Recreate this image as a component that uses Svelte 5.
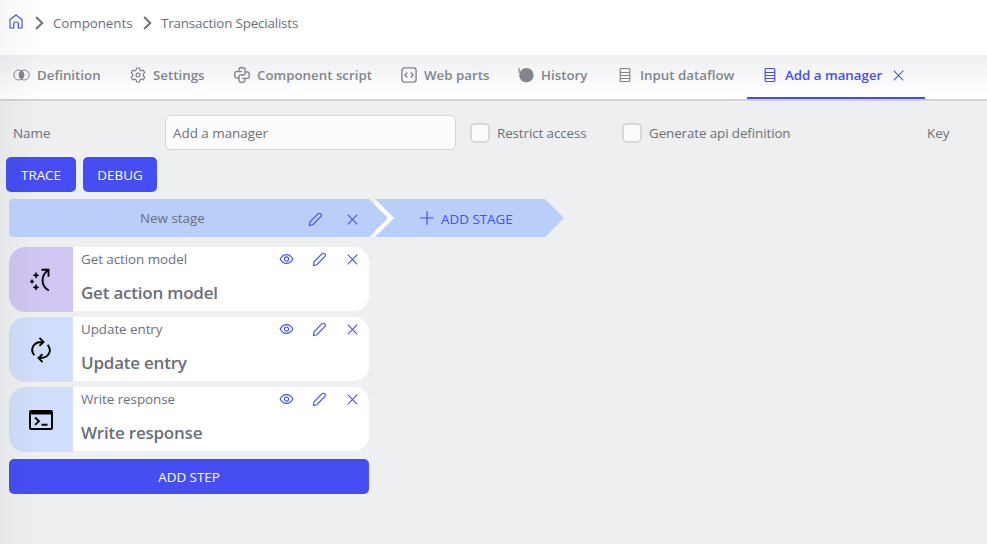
<script>
  const tabs = [
    { icon: 'rings', label: 'Definition', w: 64 },
    { icon: 'gear', label: 'Settings', w: 52 },
    { icon: 'python', label: 'Component script', w: 115 },
    { icon: 'code', label: 'Web parts', w: 65 },
    { icon: 'history', label: 'History', w: 47 },
    { icon: 'rows', label: 'Input dataflow', w: 93 },
    { icon: 'rows', label: 'Add a manager', w: 98, active: true }
  ];
  const steps = [
    { icon: 'model', label: 'Get action model', tone: 'purple' },
    { icon: 'update', label: 'Update entry', tone: 'blue' },
    { icon: 'terminal', label: 'Write response', tone: 'blue' }
  ];
</script>

{#snippet icon(name)}
  {#if name === 'home'}
    <svg width="14" height="15" viewBox="0 0 14 15"><path d="M1 5.6 7 1l6 4.6V14H9.3V9.3a1.3 1.3 0 0 0-1.3-1.3H6a1.3 1.3 0 0 0-1.3 1.3V14H1z" /></svg>
  {:else if name === 'chevron'}
    <svg class="heavy" width="9" height="14" viewBox="0 0 9 14"><path d="m1 1 6.3 6L1 13" /></svg>
  {:else if name === 'rings'}
    <svg class="thin" width="17" height="16" viewBox="0 0 17 16"><circle cx="5.8" cy="8" r="5" /><circle cx="11.2" cy="8" r="5" /><path d="M8.5 3.8a5 5 0 0 1 0 8.4 5 5 0 0 1 0-8.4z" fill="currentColor" /></svg>
  {:else if name === 'gear'}
    <svg width="16" height="16" viewBox="0 0 16 16"><path d="M6.6 1h2.8l.5 2 1.4.8 2-.6 1.4 2.4L13.3 7v2l1.4 1.4-1.4 2.4-2-.6-1.4.8-.5 2H6.600l-.5-2-1.4-.8-2 .6-1.4-2.4L2.700 9V7L1.300 5.600l1.400-2.400 2 .6L6.100 3z" /><circle cx="8" cy="8" r="1.9" /></svg>
  {:else if name === 'python'}
    <svg class="medium" width="16" height="16" viewBox="0 0 16 16"><path d="M8 4.600H2.500Q.8 4.600.8 6.300v3Q.8 11 2.500 11H5V9.500Q5 8 6.500 8h3Q11 8 11 6.500v-4Q11 .8 9.300.8H6.700Q5 .8 5 2.500v2.100M8 11.400h5.500q1.700 0 1.700-1.700v-3Q15.200 5 13.500 5H11M5 9.500v4q0 1.700 1.700 1.700h2.600q1.700 0 1.700-1.700v-2.100" /></svg>
  {:else if name === 'code'}
    <svg class="medium" width="16" height="16" viewBox="0 0 16 16"><rect x=".9" y=".9" width="14.2" height="14.2" rx="2.5" /><path d="M6.300 5.500 3.900 8l2.400 2.500M9.700 5.500 12.100 8l-2.400 2.500" /></svg>
  {:else if name === 'history'}
    <svg width="16" height="16" viewBox="0 0 16 16"><circle cx="8.400" cy="8.200" r="7.200" fill="currentColor" stroke="none" /><path d="M1.100 1v4.200h3" /></svg>
  {:else if name === 'rows'}
    <svg width="16" height="16" viewBox="0 0 16 16"><rect x="3.200" y="1.500" width="9.600" height="13" rx="1" /><path d="M3.200 5.500h9.600M3.200 8.500h9.600M3.200 11.500h9.600" /></svg>
  {:else if name === 'close'}
    <svg width="11" height="11" viewBox="0 0 12 12"><path d="m.8.8 10.400 10.400M11.200.8.8 11.200" /></svg>
  {:else if name === 'pencil'}
    <svg width="15" height="15" viewBox="0 0 16 16"><path d="m1.500 14.500.7-4 8.300-8.500q1.300-1.100 2.600-.5 1.400.7 1.300 2-.1.800-.8 1.500l-8.400 8.600z" /></svg>
  {:else if name === 'eye'}
    <svg width="15" height="12" viewBox="0 0 16 12"><path d="M1.200 6C2.800 3 5.200 1.300 8 1.300S13.200 3 14.800 6C13.200 9 10.800 10.700 8 10.700S2.800 9 1.200 6z" /><circle cx="8" cy="6" r="2.200" /></svg>
  {:else if name === 'plus'}
    <svg width="14" height="14" viewBox="0 0 14 14"><path d="M7 .3v13.400M.3 7h13.400" /></svg>
  {:else if name === 'model'}
    <svg class="heavy" width="24" height="26" viewBox="0 0 24 26"><path d="M12.500 2.700h7v7M19.500 2.700C11.500 8.500 11.500 18.500 19.800 23.500" /><path class="spark" d="m7 5.500.8 2 2 .8-2 .8-.8 2-.8-2-2-.8 2-.8zM3 12.500l.6 1.500 1.500.5-1.500.6L3 16.600l-.6-1.500-1.500-.6 1.500-.5zM7 17.500l.8 2 2 .8-2 .8-.8 2-.8-2-2-.8 2-.8z" /></svg>
  {:else if name === 'update'}
    <svg class="heavy" width="24" height="26" viewBox="0 0 24 26"><path d="M5.300 18.300C.3 11.500 5 4.500 13.500 5M10.500.9l4 4-4 4M18.700 7.700C23.700 14.500 19 21.500 10.500 21M13.500 17.100l-4 4 4 4" /></svg>
  {:else if name === 'terminal'}
    <svg class="heavy" width="24" height="20" viewBox="0 0 24 20"><rect x="1" y="1" width="22" height="18" rx="1" /><path d="M1 1h22v3.500H1z" fill="currentColor" stroke="none" /><path d="m6 7.500 4 3.700-4 3.700M12.500 14.800h6" /></svg>
  {/if}
{/snippet}

<div class="page">
  <header class="crumbs">
    <span class="home">{@render icon('home')}</span>
    <span class="sep">{@render icon('chevron')}</span>
    <span class="crumb first">Components</span>
    <span class="sep">{@render icon('chevron')}</span>
    <span class="crumb last">Transaction Specialists</span>
  </header>

  <nav class="tabs">
    {#each tabs as t}
      <div class="tab" class:active={t.active}>
        <span class="ticon">{@render icon(t.icon)}</span>
        <span class="tlabel" style:width="{t.w}px">{t.label}</span>
        {#if t.active}<span class="tclose">{@render icon('close')}</span>{/if}
      </div>
    {/each}
  </nav>

  <section class="form">
    <span class="name">Name</span>
    <input type="text" value="Add a manager" />
    <label class="restrict"><i class="box"></i><span>Restrict access</span></label>
    <label class="generate"><i class="box"></i><span>Generate api definition</span></label>
    <span>Key</span>
  </section>

  <div class="actions">
    <button class="trace">TRACE</button>
    <button class="debug">DEBUG</button>
  </div>

  <div class="stages">
    <div class="stage">
      <span class="stage-name">New stage</span>
      <span class="tool">{@render icon('pencil')}</span>
      <span class="tool">{@render icon('close')}</span>
    </div>
    <div class="add-stage">{@render icon('plus')}<span>ADD STAGE</span></div>
  </div>

  <div class="steps">
    {#each steps as s}
      <article class="step">
        <div class="badge {s.tone}">{@render icon(s.icon)}</div>
        <div class="body">
          <div class="top">
            <span class="kind">{s.label}</span>
            <span class="tool">{@render icon('eye')}</span>
            <span class="tool">{@render icon('pencil')}</span>
            <span class="tool">{@render icon('close')}</span>
          </div>
          <div class="title">{s.label}</div>
        </div>
      </article>
    {/each}
    <button class="add-step">ADD STEP</button>
  </div>
  <div class="edge"></div>
</div>

<style>
  :global(body) { margin: 0; }
  .page {
    position: relative;
    width: 987px;
    height: 544px;
    overflow: hidden;
    background: #eeeff1;
    color: #6b6f78;
    font: 13.4px/20px "Open Sans", "Noto Sans", sans-serif;
    white-space: nowrap;
  }
  .page, .page * { box-sizing: border-box; }
  svg {
    display: block;
    flex: none;
    fill: none;
    stroke: currentColor;
    stroke-width: 1.2;
    overflow: visible;
  }
  svg.thin { stroke-width: 1; }
  svg.medium { stroke-width: 1.4; }
  svg.heavy { stroke-width: 1.9; }
  .spark { fill: currentColor; stroke-width: .7; }
  .edge {
    position: absolute;
    inset: 0 auto 0 0;
    width: 40px;
    pointer-events: none;
    background: linear-gradient(90deg, rgba(40, 50, 60, .04), rgba(40, 50, 60, 0));
  }
  .crumbs {
    display: flex;
    align-items: center;
    height: 55px;
    padding: 0 0 9px 9px;
    background: #fff;
  }
  .home { color: #464df2; width: 26px; padding-bottom: 4px; }
  .sep { width: 18px; }
  .crumb { letter-spacing: -.08px; }
  .crumb.first { width: 90px; }
  .crumb.last { letter-spacing: -.18px; }
  .tabs {
    display: flex;
    height: 46px;
    background: linear-gradient(#eeeff1, #fff 90%);
    border-bottom: 2px solid #d1d4d9;
    color: #81858e;
    font-weight: 600;
    font-size: 13.3px;
  }
  .tab {
    display: flex;
    align-items: center;
    height: 44px;
    padding: 0 14px 4px 15px;
  }
  .ticon { width: 23px; }
  .tab:first-child { padding-left: 13px; }
  .tab:first-child .ticon { width: 24px; }
  .tab.active {
    width: 178px;
    color: #464df2;
    border-bottom: 2px solid #464df2;
    padding-bottom: 2px;
  }
  .tclose { margin-left: 10px; }
  .form {
    display: flex;
    align-items: center;
    height: 35px;
    margin-top: 14px;
    padding-left: 13px;
  }
  .name { width: 152px; }
  input {
    width: 291px;
    height: 35px;
    padding: 0 7px;
    border: 1px solid #d5d7db;
    border-radius: 6px;
    background: #fcfcfc;
    color: inherit;
    font: inherit;
    outline: none;
  }
  label { display: flex; align-items: center; gap: 7px; letter-spacing: -.1px; }
  .box {
    width: 20px;
    height: 20px;
    border: 2px solid #d5d7db;
    border-radius: 5px;
    background: #fcfcfc;
  }
  .restrict { width: 152px; margin-left: 14px; }
  .generate { width: 305px; }
  .actions { display: flex; gap: 7px; margin: 7px 0 0 6px; }
  button {
    height: 35px;
    padding: 0;
    border: 0;
    border-radius: 5px;
    background: #464df2;
    color: #fff;
    font: inherit;
  }
  .trace { width: 70px; }
  .debug { width: 74px; }
  .stages { display: flex; height: 38px; margin: 7px 0 0 9px; }
  .stage {
    z-index: 1;
    display: flex;
    align-items: center;
    width: 379px;
    padding: 3px 0 0 131px;
    border-radius: 4px 0 0 4px;
    background: #b9cef9;
    clip-path: polygon(0 0, 360px 0, 100% 50%, 360px 100%, 0 100%);
  }
  .stage-name { width: 168px; padding-bottom: 3px; }
  .tool { display: flex; color: #464df2; }
  .stage .tool { width: 39px; }
  .add-stage {
    position: relative;
    display: flex;
    align-items: center;
    gap: 7px;
    width: 189px;
    margin-left: -13px;
    padding-left: 45px;
    background: #b9cef9;
    color: #464df2;
    clip-path: polygon(0 0, 170px 0, 100% 50%, 170px 100%, 0 100%);
  }
  .add-stage span { padding-top: 2px; }
  .add-stage::before {
    content: "";
    position: absolute;
    inset: 0 auto 0 0;
    width: 19px;
    background: #fff;
    clip-path: polygon(0 0, 100% 50%, 0 100%);
  }
  .steps {
    display: flex;
    flex-direction: column;
    gap: 6px;
    width: 360px;
    margin: 10px 0 0 9px;
  }
  .step {
    display: flex;
    height: 64px;
    border-radius: 15px;
    background: #fff;
  }
  .badge {
    display: flex;
    flex: none;
    align-items: center;
    justify-content: center;
    width: 64px;
    height: 65px;
    border-radius: 16px 0 0 16px;
    color: #000;
  }
  .purple { background: #d0c6f1; }
  .blue { background: #d0defb; }
  .body { flex: 1; padding: 2px 0 0 8px; }
  .top { display: flex; align-items: center; height: 20px; }
  .kind { width: 198px; letter-spacing: -.05px; }
  .top .tool { width: 33px; }
  .top .tool:last-child { padding-left: 2px; }
  .title {
    margin-top: 11px;
    font-size: 17px;
    line-height: 26px;
    font-weight: 600;
    letter-spacing: -.22px;
  }
  .add-step { margin-top: 2px; }
</style>
